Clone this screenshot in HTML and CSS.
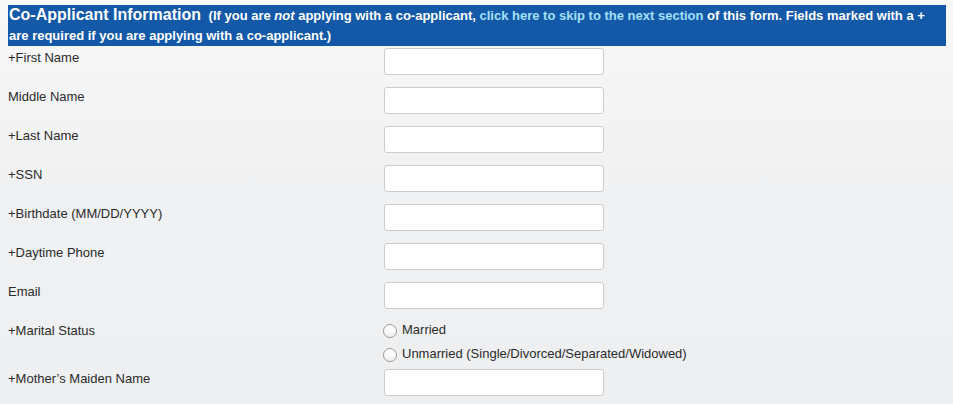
FILE: index.html
```html
<!DOCTYPE html>
<html lang="en">
<head>
<meta charset="utf-8">
<title>Co-Applicant Information</title>
<link rel="stylesheet" href="styles.css">
</head>
<body>
<div class="section-head">
  <span class="title">Co-Applicant Information</span>
  <span class="note">(If you are <em>not</em> applying with a co-applicant, <a href="#next">click here to skip to the next section</a> of this form. Fields marked with a + are required if you are applying with a co-applicant.)</span>
</div>
<form class="rows">
  <div class="row"><label class="lbl">+First Name</label><input class="field" type="text"></div>
  <div class="row"><label class="lbl">Middle Name</label><input class="field" type="text"></div>
  <div class="row"><label class="lbl">+Last Name</label><input class="field" type="text"></div>
  <div class="row"><label class="lbl">+SSN</label><input class="field" type="text"></div>
  <div class="row"><label class="lbl">+Birthdate (MM/DD/YYYY)</label><input class="field" type="text"></div>
  <div class="row"><label class="lbl">+Daytime Phone</label><input class="field" type="text"></div>
  <div class="row"><label class="lbl">Email</label><input class="field" type="text"></div>
  <div class="row">
    <label class="lbl">+Marital Status</label>
    <div class="radios">
      <label class="opt"><input class="radio" type="radio" name="ms">Married</label>
      <label class="opt"><input class="radio" type="radio" name="ms">Unmarried (Single/Divorced/Separated/Widowed)</label>
    </div>
  </div>
  <div class="row"><label class="lbl">+Mother’s Maiden Name</label><input class="field" type="text"></div>
</form>
</body>
</html>
```
FILE: styles.css
```css
html {
  background: linear-gradient(180deg, #f8f8f9 0%, #f0f1f2 45%, #eeeff0 100%);
  min-height: 100%;
}
body {
  margin: 5px 7px 0 8px;
  font-family: "Liberation Sans", Arial, Helvetica, sans-serif;
  font-size: 13px;
  color: #2b2b2b;
}
.section-head {
  background: #1459a7;
  color: #fff;
  font-weight: bold;
  font-size: 13px;
  line-height: 20px;
  padding: 0 1px;
}
.title {
  font-size: 16px;
  margin-right: 4px;
}
.note {
  font-size: 13px;
}
.note a {
  color: #a4e0f6;
  text-decoration: none;
}
.rows {
  margin-top: 2px;
  display: flex;
  flex-direction: column;
  gap: 12px;
}
.row {
  display: grid;
  grid-template-columns: 376px 1fr;
  align-items: start;
}
.lbl {
  padding-top: 2px;
  line-height: 15px;
}
.field {
  box-sizing: border-box;
  width: 220px;
  height: 27px;
  margin: 0;
  border: 1px solid #cdcdcd;
  border-radius: 3px;
  background: #fff;
}
.radios {
  display: flex;
  flex-direction: column;
  gap: 8px;
  padding-top: 1px;
  margin-bottom: -5px;
}
.opt {
  display: flex;
  align-items: center;
  line-height: 16px;
}
.radio {
  appearance: none;
  -webkit-appearance: none;
  box-sizing: border-box;
  width: 14px;
  height: 14px;
  margin: 1px 5px 0 -1px;
  border: 1px solid #9a9a9a;
  border-radius: 50%;
  background: linear-gradient(180deg, #ffffff 0%, #f2f2f2 100%);
}
```
